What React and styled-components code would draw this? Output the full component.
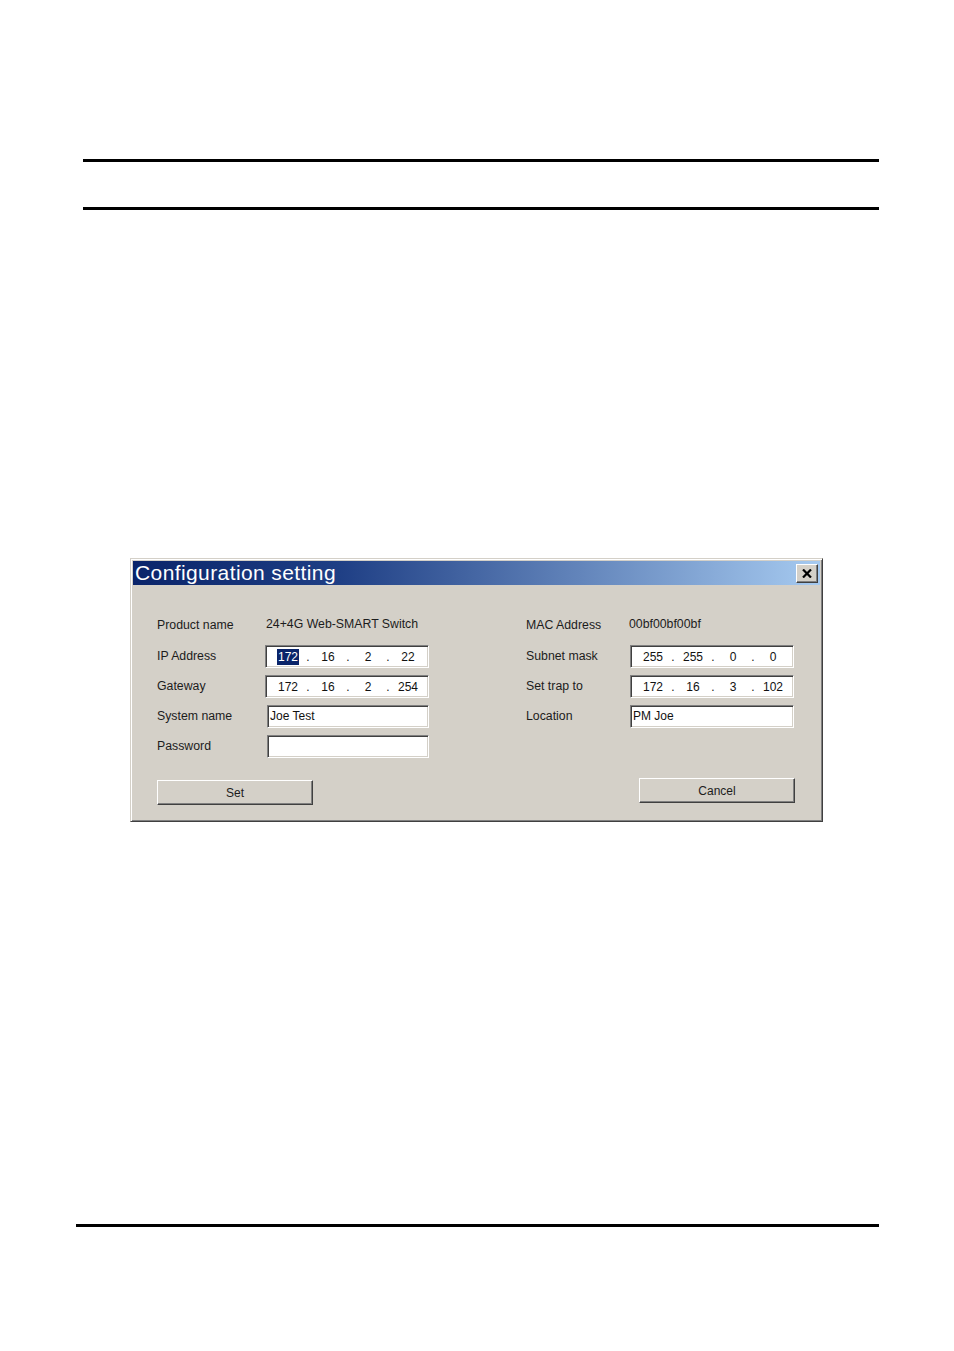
import React from 'react'
import styled, { createGlobalStyle } from 'styled-components'

const GlobalStyle = createGlobalStyle`
  html, body {
    margin: 0;
    padding: 0;
    background: #ffffff;
  }
  * {
    box-sizing: border-box;
  }
`;

const leftRows = [
  { label: 'Product name', text: '24+4G Web-SMART Switch' },
  { label: 'IP Address', ip: ['172', '16', '2', '22'], selected: true },
  { label: 'Gateway', ip: ['172', '16', '2', '254'] },
  { label: 'System name', input: 'Joe Test' },
  { label: 'Password', input: '' },
];

const rightRows = [
  { label: 'MAC Address', text: '00bf00bf00bf' },
  { label: 'Subnet mask', ip: ['255', '255', '0', '0'] },
  { label: 'Set trap to', ip: ['172', '16', '3', '102'] },
  { label: 'Location', input: 'PM Joe' },
];

const IpBox = ({ parts, selected }) => (
  <IpField>
    {parts.map((p, i) => (
      <React.Fragment key={i}>
        <Octet>{selected && i === 0 ? <Selected>{p}</Selected> : p}</Octet>
        {i < 3 && <Dot>.</Dot>}
      </React.Fragment>
    ))}
  </IpField>
);

const Column = ({ rows, labelWidth, inset, valueShift }) => (
  <FieldGrid $labelWidth={labelWidth}>
    {rows.map((r) => (
      <React.Fragment key={r.label}>
        <Label>{r.label}</Label>
        <Cell>
          {r.text !== undefined && <Value $shift={valueShift}>{r.text}</Value>}
          {r.ip && <IpBox parts={r.ip} selected={r.selected} />}
          {r.input !== undefined && <TextField $inset={inset}>{r.input}</TextField>}
        </Cell>
      </React.Fragment>
    ))}
  </FieldGrid>
);

const App = () => {
  return (
    <>
      <GlobalStyle />
      <Page>
        <Rule $left={83} $width={796} />
        <Rule $left={83} $width={796} $gap={45} />
        <Dialog>
          <TitleBar>
            <Title>Configuration setting</Title>
            <CloseButton>
              <svg width="10" height="9" viewBox="0 0 10 9">
                <path d="M1 0.5 L9 8.5 M9 0.5 L1 8.5" stroke="#000" strokeWidth="2.2" />
              </svg>
            </CloseButton>
          </TitleBar>
          <Body>
            <Columns>
              <Column rows={leftRows} labelWidth={108} inset={2} valueShift={1} />
              <Column rows={rightRows} labelWidth={104} inset={0} valueShift={-1} />
            </Columns>
            <ButtonRow>
              <Button $drop={2}>Set</Button>
              <Button>Cancel</Button>
            </ButtonRow>
          </Body>
        </Dialog>
        <Rule $left={76} $width={803} $gap={402} />
      </Page>
    </>
  );
};

const Page = styled.div`
  width: 954px;
  min-height: 1351px;
  padding-top: 159px;
  background: #ffffff;
  font-family: 'Liberation Sans', Arial, sans-serif;
`;

const Rule = styled.div`
  height: 3px;
  background: #000000;
  margin-left: ${(p) => p.$left}px;
  width: ${(p) => p.$width}px;
  margin-top: ${(p) => p.$gap || 0}px;
`;

const Dialog = styled.div`
  width: 693px;
  margin: 348px 0 0 130px;
  padding: 2px;
  background: #d4d0c8;
  border: 1px solid;
  border-color: #d4d0c8 #404040 #404040 #d4d0c8;
  box-shadow: inset 1px 1px #ffffff, inset -1px -1px #808080;
`;

const TitleBar = styled.div`
  height: 24px;
  display: flex;
  align-items: center;
  justify-content: space-between;
  padding: 0 2px 0 2px;
  background: linear-gradient(to right, #0a246a 0%, #1f3f85 30%, #a6caf0 100%);
`;

const Title = styled.span`
  color: #ffffff;
  font-size: 21px;
  line-height: 24px;
  letter-spacing: 0.4px;
`;

const CloseButton = styled.div`
  width: 22px;
  height: 19px;
  display: flex;
  align-items: center;
  justify-content: center;
  background: #d4d0c8;
  border: 1px solid;
  border-color: #ffffff #404040 #404040 #ffffff;
  box-shadow: inset -1px -1px #808080;
`;

const Body = styled.div`
  padding: 23px 25px 14px 24px;
`;

const Columns = styled.div`
  display: grid;
  grid-template-columns: 369px 269px;
`;

const FieldGrid = styled.div`
  display: grid;
  grid-template-columns: ${(p) => p.$labelWidth}px 164px;
  grid-template-rows: 33px repeat(4, 30px);
  align-items: center;
  align-content: start;
`;

const Label = styled.div`
  font-size: 12.3px;
  color: #1c1c1c;
  white-space: nowrap;
`;

const Cell = styled.div`
  display: flex;
  align-items: center;
`;

const Value = styled.div`
  font-size: 12.3px;
  color: #1c1c1c;
  white-space: nowrap;
  margin-left: ${(p) => p.$shift}px;
  margin-top: -2px;
`;

const Sunken = styled.div`
  height: 23px;
  width: 164px;
  background: #ffffff;
  border: 1px solid;
  border-color: #808080 #ffffff #ffffff #808080;
  box-shadow: inset 1px 1px #404040, inset -1px -1px #d4d0c8;
  font-size: 12px;
  color: #111111;
`;

const IpField = styled(Sunken)`
  display: flex;
  align-items: center;
  padding-left: 7px;
  margin-top: 1px;
`;

const Octet = styled.span`
  width: 30px;
  text-align: center;
`;

const Dot = styled.span`
  width: 10px;
  text-align: center;
`;

const Selected = styled.span`
  background: #0a246a;
  color: #ffffff;
  padding: 1px 1px;
`;

const TextField = styled(Sunken)`
  margin-left: ${(p) => p.$inset}px;
  display: flex;
  align-items: center;
  padding-left: 2px;
`;

const ButtonRow = styled.div`
  display: flex;
  justify-content: space-between;
  align-items: flex-start;
  margin-top: 17px;
  height: 27px;
`;

const Button = styled.div`
  width: 156px;
  height: 25px;
  margin-top: ${(p) => p.$drop || 0}px;
  display: flex;
  align-items: center;
  justify-content: center;
  background: #d4d0c8;
  border: 1px solid;
  border-color: #ffffff #404040 #404040 #ffffff;
  box-shadow: inset -1px -1px #808080;
  font-size: 12px;
  color: #1c1c1c;
`;

export default App;
